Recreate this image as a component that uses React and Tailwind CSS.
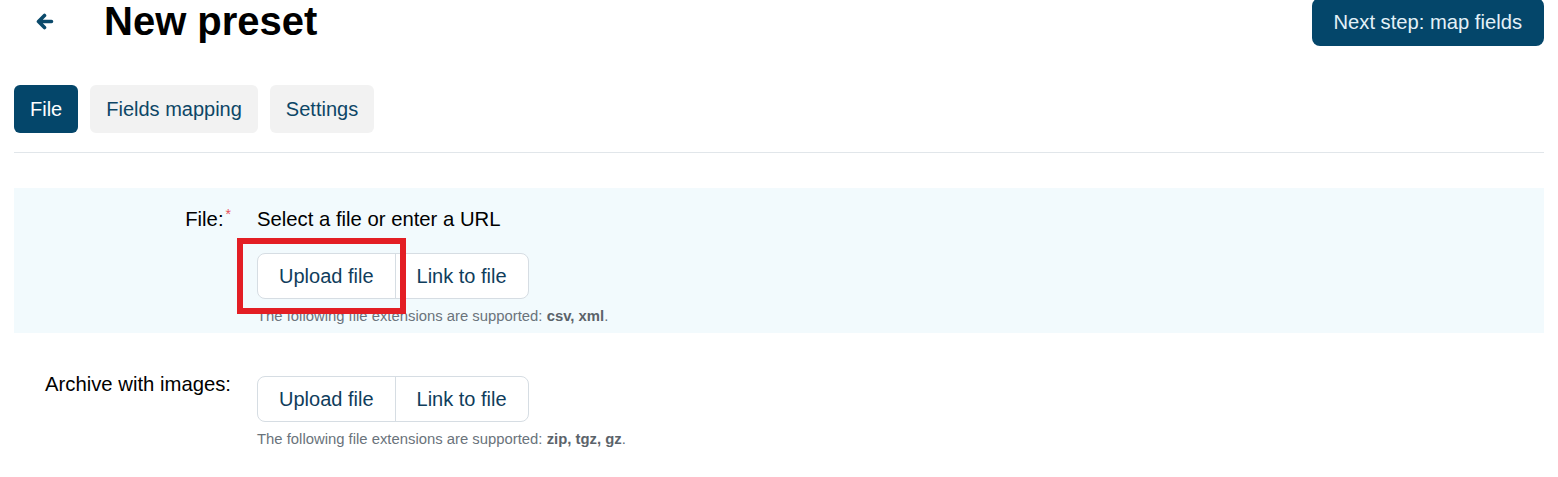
// Step one of the "New preset" import wizard: choose the data file and an optional image archive.
const FONT = { fontFamily: '"Liberation Sans", Arial, sans-serif' };

function BackArrow() {
  return (
    <svg width="19" height="17" viewBox="0 0 19 17" fill="none" aria-hidden="true">
      <path
        d="M16.5 8.5H3.5M9.5 2.5l-6 6 6 6"
        stroke="#0b4a6b"
        strokeWidth="3.6"
        strokeLinecap="round"
        strokeLinejoin="round"
      />
    </svg>
  );
}

function Tab({ active, children }) {
  return (
    <button
      className={
        active
          ? "rounded-md bg-[#04466a] px-4 py-3 text-[20px] leading-6 text-white"
          : "rounded-md bg-[#f2f2f2] px-4 py-3 text-[20px] leading-6 text-[#0d4666]"
      }
    >
      {children}
    </button>
  );
}

function Picker({ highlight }) {
  return (
    <div className="relative flex w-fit rounded-lg border border-[#d6dde3] bg-white text-[20px] leading-6 text-[#0f3d5c]">
      <button className="border-r border-[#d6dde3] px-[21px] py-[10px]">Upload file</button>
      <button className="px-[21px] py-[10px]">Link to file</button>
      {highlight && (
        <div className="pointer-events-none absolute -left-[21px] -top-[16px] h-[76px] w-[169px] border-[6px] border-[#e31e24]" />
      )}
    </div>
  );
}

function Help({ exts }) {
  return (
    <div className="mt-2 text-[14.85px] leading-[18px] text-[#6a737b]">
      The following file extensions are supported: <b className="font-bold text-[#5b636a]">{exts}</b>.
    </div>
  );
}

export default function App() {
  return (
    <div className="min-h-[477px] bg-white px-[14px] text-black" style={FONT}>
      <div className="-mt-[2px] flex items-start justify-between">
        <div className="flex items-center">
          <div className="ml-[21px] flex h-[46px] w-[19px] items-center">
            <BackArrow />
          </div>
          <h1 className="ml-[50px] text-[40px] font-bold leading-[46px]">New preset</h1>
        </div>
        <button className="rounded-lg bg-[#04466a] px-[22px] py-3 text-[20.2px] leading-6 text-[#e3f1f8]">
          Next step: map fields
        </button>
      </div>

      <div className="mt-[39px] flex gap-3">
        <Tab active>File</Tab>
        <Tab>Fields mapping</Tab>
        <Tab>Settings</Tab>
      </div>

      <div className="mt-[19px] h-px bg-[#e1e6ea]" />

      <div className="mt-[35px] flex bg-[#f2fafd] pb-2 pt-[19px]">
        <div className="w-[243px] shrink-0 pr-[26px] text-right text-[20.3px] leading-6">
          File:
          <span className="relative -top-[7px] ml-[2px] text-[14px] text-[#e8505b]">*</span>
        </div>
        <div>
          <div className="text-[20.3px] leading-6">Select a file or enter a URL</div>
          <div className="mt-[22px]">
            <Picker highlight />
          </div>
          <Help exts="csv, xml" />
        </div>
      </div>

      <div className="mt-[39px] flex">
        <div className="w-[243px] shrink-0 pr-[26px] text-right text-[20.3px] leading-6">Archive with images:</div>
        <div className="pt-1">
          <Picker />
          <Help exts="zip, tgz, gz" />
        </div>
      </div>
    </div>
  );
}
